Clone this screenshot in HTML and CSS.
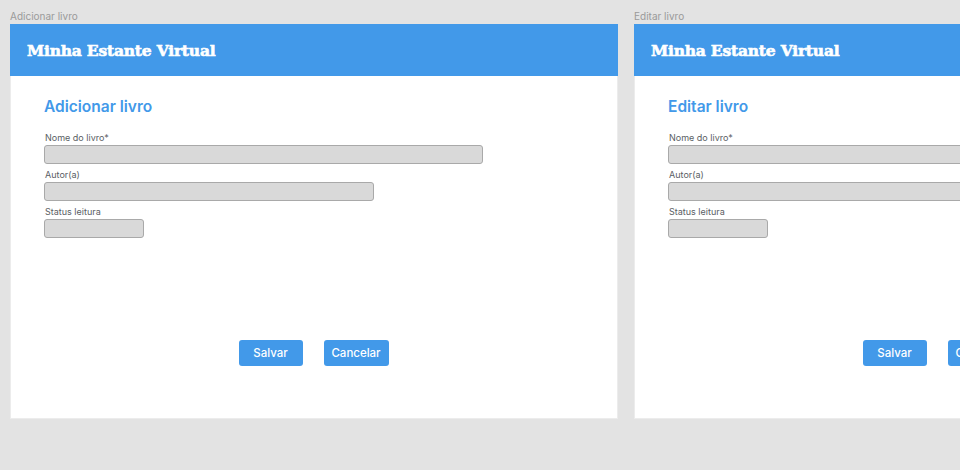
FILE: index.html
```html
<!DOCTYPE html>
<html lang="pt">
<head>
<meta charset="utf-8">
<title>Minha Estante Virtual</title>
<link rel="stylesheet" href="styles.css">
</head>
<body>
<div class="canvas">
  <section class="frame">
    <div class="frame-label">Adicionar livro</div>
    <div class="card">
      <header class="topbar"><span class="brand">Minha Estante Virtual</span></header>
      <main class="content">
        <h1 class="title">Adicionar livro</h1>
        <div class="field"><label class="label">Nome do livro*</label><div class="input input-lg"></div></div>
        <div class="field"><label class="label">Autor(a)</label><div class="input input-md"></div></div>
        <div class="field"><label class="label">Status leitura</label><div class="input input-sm"></div></div>
        <div class="actions">
          <button class="btn">Salvar</button>
          <button class="btn">Cancelar</button>
        </div>
      </main>
    </div>
  </section>
  <section class="frame">
    <div class="frame-label">Editar livro</div>
    <div class="card">
      <header class="topbar"><span class="brand">Minha Estante Virtual</span></header>
      <main class="content">
        <h1 class="title">Editar livro</h1>
        <div class="field"><label class="label">Nome do livro*</label><div class="input input-lg"></div></div>
        <div class="field"><label class="label">Autor(a)</label><div class="input input-md"></div></div>
        <div class="field"><label class="label">Status leitura</label><div class="input input-sm"></div></div>
        <div class="actions">
          <button class="btn">Salvar</button>
          <button class="btn">Cancelar</button>
        </div>
      </main>
    </div>
  </section>
</div>
</body>
</html>
```
FILE: styles.css
```css
* { box-sizing: border-box; }
html, body { margin: 0; padding: 0; }
body {
  background: #e3e3e3;
  font-family: Inter, "Liberation Sans", sans-serif;
  width: 960px;
  height: 470px;
  overflow: hidden;
}
.canvas {
  display: flex;
  gap: 16px;
  padding-left: 10px;
  width: 960px;
  overflow: hidden;
}
.frame {
  flex: 0 0 608px;
  display: flex;
  flex-direction: column;
}
.frame-label {
  font-size: 10px;
  line-height: 12px;
  color: #9a9a9a;
  margin-top: 10px;
  margin-bottom: 2px;
  height: 12px;
}
.card {
  width: 608px;
  height: 395px;
  background: #ffffff;
  border: 1px solid #ececec;
  border-top: none;
  display: flex;
  flex-direction: column;
}
.topbar {
  height: 52px;
  background: #4299e9;
  display: flex;
  align-items: center;
  padding-left: 17px;
  margin: 0 -1px;
}
.brand {
  color: #ffffff;
  font-family: "DejaVu Serif", "Liberation Serif", serif;
  font-weight: bold;
  font-size: 15.5px;
  letter-spacing: -0.2px;
  -webkit-text-stroke: 0.6px #ffffff;
}
.content {
  padding: 21px 0 0 33px;
  display: flex;
  flex-direction: column;
  flex: 1;
}
.title {
  margin: 0 0 15px;
  font-size: 15.5px;
  line-height: 20px;
  font-weight: 600;
  color: #4299e9;
}
.field {
  display: flex;
  flex-direction: column;
  margin-bottom: 5px;
}
.label {
  font-size: 9px;
  line-height: 12px;
  color: #5a5e64;
  margin-bottom: 1px;
  padding-left: 1px;
}
.input {
  height: 19px;
  background: #d9d9d9;
  border: 1px solid #a9a9a9;
  border-radius: 3px;
}
.input-lg { width: 439px; }
.input-md { width: 330px; }
.input-sm { width: 100px; }
.actions {
  margin-top: 97px;
  display: flex;
  justify-content: center;
  gap: 21px;
  padding-right: 34px;
}
.btn {
  width: 64px;
  height: 26px;
  border: none;
  border-radius: 3px;
  background: #4299e9;
  color: #ffffff;
  font-family: Inter, "Liberation Sans", sans-serif;
  font-size: 11.5px;
  font-weight: 500;
  padding: 0;
}
.btn + .btn { width: 65px; }
```
